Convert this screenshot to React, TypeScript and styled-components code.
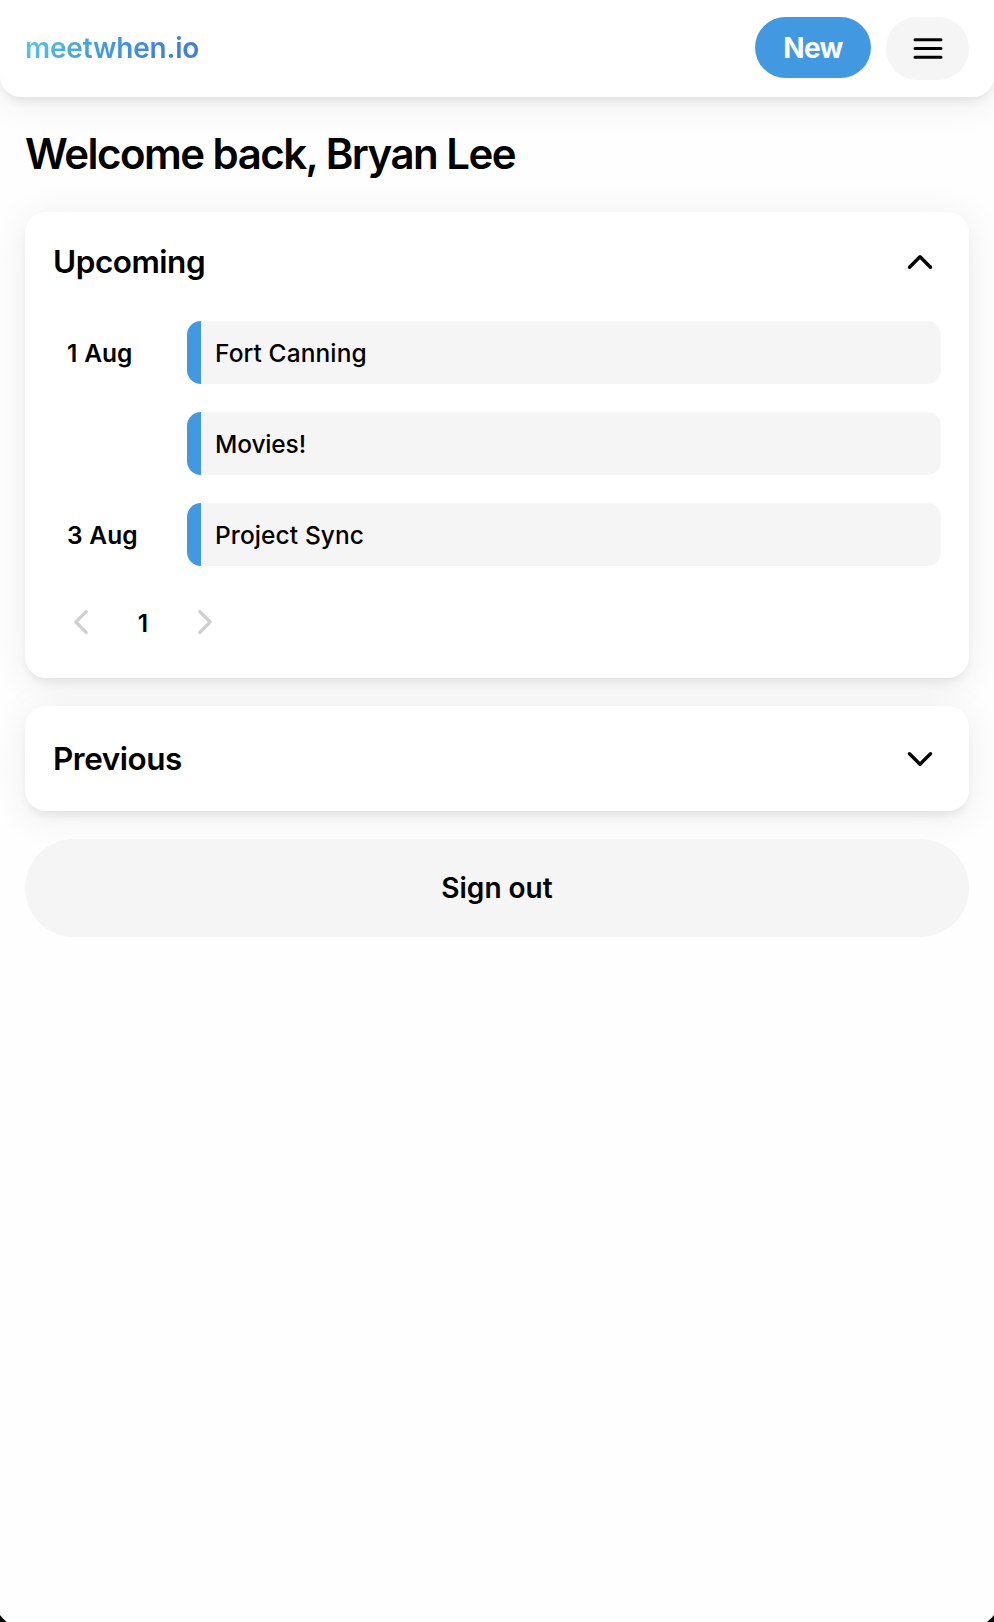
import React from 'react';
import styled, { createGlobalStyle } from 'styled-components';

const GlobalStyle = createGlobalStyle`
  * { box-sizing: border-box; }
  html, body { margin: 0; background: #000; }
  body { font-family: Inter, 'Liberation Sans', sans-serif; color: #000; overflow: hidden; }
  button { font: inherit; color: inherit; border: 0; padding: 0; }
  h1, h2 { margin: 0; font-weight: 600; }
`;

const SHADOW = '0 7px 10px -3px rgba(0, 0, 0, 0.075), 0 5px 38px rgba(0, 0, 0, 0.075)';

const Page = styled.div`
  height: 100vh;
  background: #fefefe;
  clip-path: polygon(0 0, 100% 0, 100% calc(100% - 7px), calc(100% - 2.5px) calc(100% - 4px),
    calc(100% - 7px) 100%, 6.5px 100%, 2.5px calc(100% - 4px), 0 calc(100% - 7px));
`;

const Header = styled.header`
  display: flex;
  align-items: flex-start;
  height: 97px;
  padding: 17px 25px 0;
  background: #fff;
  border-radius: 0 0 21px 21px;
  box-shadow: ${SHADOW};
`;

const Logo = styled.span`
  margin-right: auto;
  font-size: 28px;
  line-height: 62px;
  font-weight: 600;
  letter-spacing: -0.2px;
  color: transparent;
  background: linear-gradient(135deg, #63d3dd 0%, #4299e1 48%, #4180d9 75%, #417ae0 100%);
  background-clip: text;
  -webkit-background-clip: text;
`;

const NewButton = styled.button`
  width: 116px;
  height: 61px;
  margin-right: 15px;
  padding-top: 1px;
  border-radius: 31px;
  background: #4299e1;
  color: #fff;
  font-size: 28px;
  font-weight: 700;
  letter-spacing: -0.6px;
`;

const MenuButton = styled.button`
  display: grid;
  place-items: center;
  width: 83px;
  height: 63px;
  border-radius: 31px;
  background: #f5f5f5;
`;

const Main = styled.main`
  display: flex;
  flex-direction: column;
  gap: 28px;
  padding: 32px 25px 0;
`;

const Title = styled.h1`
  height: 55px;
  line-height: 50px;
  font-size: 42px;
  letter-spacing: -1.53px;
`;

const Card = styled.section<{ $height: number }>`
  height: ${(p) => p.$height}px;
  padding: 0 28px;
  border-radius: 21px;
  background: #fff;
  box-shadow: ${SHADOW};
`;

const CardHeader = styled.div<{ $height: number }>`
  display: flex;
  align-items: center;
  justify-content: space-between;
  height: ${(p) => p.$height}px;
  padding-right: 7px;
`;

const CardTitle = styled.h2`
  font-size: 31.5px;
  line-height: 44px;
  letter-spacing: -0.48px;
`;

const Schedule = styled.div`
  display: grid;
  grid-template-columns: 120px 1fr;
  column-gap: 14px;
  row-gap: 28px;
  margin-top: 10px;
`;

const DateLabel = styled.div`
  height: 63px;
  padding-left: 14px;
  font-size: 24.5px;
  line-height: 65px;
  font-weight: 600;
  word-spacing: 0.6px;
`;

const Meeting = styled.div<{ $tracking: number }>`
  height: 63px;
  padding-left: 14px;
  border-left: 14px solid #4299e1;
  border-radius: 14px;
  background: #f5f5f5;
  font-size: 24.5px;
  line-height: 65px;
  font-weight: 500;
  letter-spacing: ${(p) => p.$tracking}px;
`;

const Pager = styled.div`
  display: flex;
  align-items: center;
  width: 180px;
  height: 63px;
  margin-top: 24px;
`;

const PagerButton = styled.button`
  display: grid;
  place-items: center;
  width: 56px;
  height: 56px;
  background: none;
  color: #d0d0d0;
`;

const PagerCurrent = styled.span`
  flex: 1;
  padding-top: 2px;
  text-align: center;
  font-size: 24.5px;
  font-weight: 600;
`;

const SignOut = styled.button`
  height: 98px;
  border-radius: 49px;
  background: #f5f5f5;
  font-size: 28px;
  font-weight: 600;
`;

const ROTATION = { up: 0, right: 90, down: 180, left: 270 };

function Chevron({ direction, weight }: { direction: keyof typeof ROTATION; weight: number }) {
  return (
    <svg width="28" height="28" viewBox="0 0 28 28" fill="none" stroke="currentColor"
      strokeWidth={weight} strokeLinecap="round" strokeLinejoin="round">
      <path d="M3.5 19.3 14 8.8 24.5 19.3" transform={`rotate(${ROTATION[direction]} 14 14)`} />
    </svg>
  );
}

function MenuIcon() {
  return (
    <svg width="30" height="24" viewBox="0 0 30 24" stroke="#000" strokeWidth="3" strokeLinecap="round">
      <path d="M2 2.7h26M2 11.5h26M2 20.3h26" />
    </svg>
  );
}

const meetings = [
  { date: '1 Aug', name: 'Fort Canning', tracking: 0.1 },
  { date: '', name: 'Movies!', tracking: -0.15 },
  { date: '3 Aug', name: 'Project Sync', tracking: 0.1 },
];

export default function App() {
  return (
    <>
      <GlobalStyle />
      <Page>
        <Header>
          <Logo>meetwhen.io</Logo>
          <NewButton>New</NewButton>
          <MenuButton aria-label="Menu"><MenuIcon /></MenuButton>
        </Header>
        <Main>
          <Title>Welcome back, Bryan Lee</Title>
          <Card $height={466}>
            <CardHeader $height={99}>
              <CardTitle>Upcoming</CardTitle>
              <Chevron direction="up" weight={3.4} />
            </CardHeader>
            <Schedule>
              {meetings.map((m) => (
                <React.Fragment key={m.name}>
                  <DateLabel>{m.date}</DateLabel>
                  <Meeting $tracking={m.tracking}>{m.name}</Meeting>
                </React.Fragment>
              ))}
            </Schedule>
            <Pager>
              <PagerButton aria-label="Previous page"><Chevron direction="left" weight={3.2} /></PagerButton>
              <PagerCurrent>1</PagerCurrent>
              <PagerButton aria-label="Next page"><Chevron direction="right" weight={3.2} /></PagerButton>
            </Pager>
          </Card>
          <Card $height={105}>
            <CardHeader $height={105}>
              <CardTitle>Previous</CardTitle>
              <Chevron direction="down" weight={3.4} />
            </CardHeader>
          </Card>
          <SignOut>Sign out</SignOut>
        </Main>
      </Page>
    </>
  );
}
